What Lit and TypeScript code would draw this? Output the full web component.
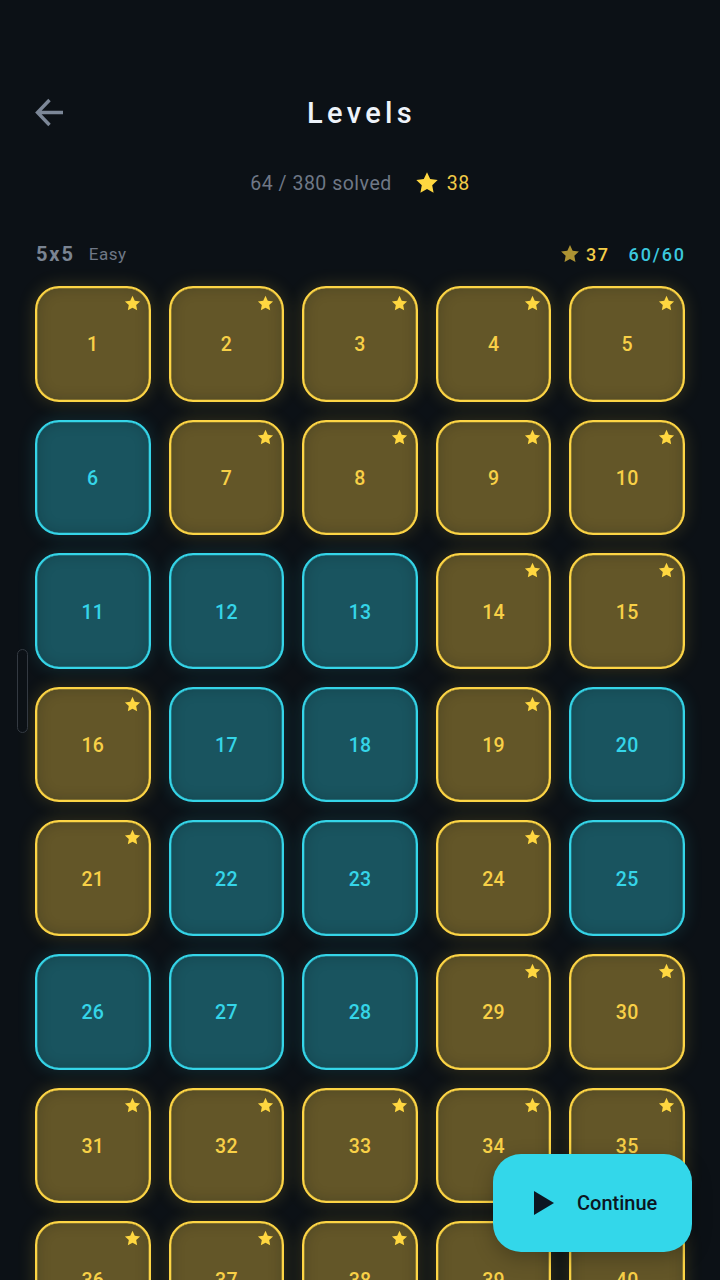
import { LitElement, html, css, svg } from "lit";
import { customElement } from "lit/decorators.js";

const STAR = svg`<path d="M12 1.2l3.2 6.9 7.5.9-5.5 5.2 1.4 7.5L12 18.1l-6.6 3.6 1.4-7.5L1.3 9l7.5-.9z"/>`;
const TEAL = new Set([6, 11, 12, 13, 17, 18, 20, 22, 23, 25, 26, 27, 28]);

@customElement("app-root")
export class AppRoot extends LitElement {
  static styles = css`
    :host {
      display: block;
      width: 720px;
      height: 1280px;
      position: relative;
      overflow: hidden;
      background: #0c1116;
      font-family: Roboto, "Liberation Sans", sans-serif;
    }
    .header {
      display: flex;
      align-items: center;
      justify-content: center;
      height: 40px;
      margin-top: 93px;
      padding: 0 35px;
      position: relative;
    }
    .back {
      position: absolute;
      left: 34px;
      top: 5px;
      width: 30px;
      height: 30px;
      display: block;
      fill: none;
      stroke: #7c8797;
      stroke-width: 3.4;
    }
    .title {
      font-size: 29px;
      font-weight: 500;
      letter-spacing: 4.3px;
      color: #eef3fa;
      line-height: 40px;
      margin-left: 3px;
    }
    .summary {
      display: flex;
      justify-content: center;
      align-items: center;
      height: 24px;
      margin-top: 38px;
      font-size: 19.5px;
      letter-spacing: 0.5px;
      color: #6f7886;
    }
    .summary .star {
      width: 24px;
      height: 24px;
      fill: #ffd740;
      margin: 0 8px 0 23px;
      display: block;
    }
    .summary .count {
      color: #f2cb47;
    }
    .section {
      display: flex;
      align-items: center;
      justify-content: space-between;
      height: 24px;
      margin-top: 47px;
      padding: 0 34px 0 36px;
    }
    .group {
      display: flex;
      align-items: center;
    }
    .size {
      font-size: 20px;
      font-weight: 700;
      letter-spacing: 1.9px;
      color: #7a8492;
    }
    .diff {
      font-size: 17px;
      letter-spacing: 0.5px;
      color: #6f7886;
      margin-left: 14px;
    }
    .sstar {
      width: 20px;
      height: 20px;
      fill: #ad9333;
      display: block;
      margin-right: 6px;
    }
    .stars,
    .done {
      font-size: 18px;
      font-weight: 500;
      letter-spacing: 1.9px;
    }
    .stars {
      color: #f4cd48;
      letter-spacing: 1.5px;
    }
    .done {
      color: #3bc8de;
      margin-left: 19px;
    }
    .grid {
      display: grid;
      grid-template-columns: repeat(5, 1fr);
      gap: 18px;
      padding: 0 35px;
      margin-top: 20px;
    }
    .cell {
      position: relative;
      box-sizing: border-box;
      aspect-ratio: 1;
      border-radius: 24px;
      border: 2px solid;
      display: flex;
      align-items: center;
      justify-content: center;
      padding-top: 2px;
      font-size: 19.5px;
      font-weight: 500;
      letter-spacing: 0.3px;
    }
    .gold {
      border-color: #fdd545;
      color: #f8d047;
      background: #635628;
      box-shadow: 0 0 18px rgba(255, 214, 64, 0.18), inset 0 0 0 0.3px #fdd545,
        inset 0 0 14px rgba(11, 16, 21, 0.22);
    }
    .teal {
      border-color: #35d5e8;
      color: #35d5e8;
      background: #19545f;
      box-shadow: 0 0 18px rgba(53, 213, 232, 0.16), inset 0 0 0 0.3px #35d5e8,
        inset 0 0 14px rgba(11, 16, 21, 0.22);
    }
    .badge {
      position: absolute;
      top: 7px;
      right: 8px;
      width: 17px;
      height: 17px;
      fill: #ffd740;
      display: block;
    }
    .scroll {
      position: absolute;
      left: 17px;
      top: 649px;
      width: 11px;
      height: 84px;
      box-sizing: border-box;
      border: 1px solid #343a42;
      border-radius: 6px;
      background: #0c1116;
    }
    .fab {
      position: absolute;
      left: 493px;
      top: 1154px;
      width: 199px;
      height: 98px;
      border-radius: 28px;
      background: #33d7ea;
      display: flex;
      align-items: center;
      box-sizing: border-box;
      padding-left: 41px;
      color: #0c1622;
      font-size: 20px;
      font-weight: 500;
      box-shadow: 0 6px 20px rgba(0, 0, 0, 0.25);
    }
    .fab svg {
      width: 20px;
      height: 24px;
      fill: #0c1622;
      display: block;
      margin-right: 23px;
    }
  `;

  render() {
    const levels = Array.from({ length: 40 }, (_, i) => i + 1);
    return html`
      <div class="header">
        <svg class="back" viewBox="0 0 30 30">
          <path d="M29 14.5H3.5M15.5 2L3.5 14.5 15.5 27" />
        </svg>
        <div class="title">Levels</div>
      </div>
      <div class="summary">
        <span>64 / 380 solved</span>
        <svg class="star" viewBox="0 0 24 24">${STAR}</svg>
        <span class="count">38</span>
      </div>
      <div class="section">
        <div class="group">
          <span class="size">5x5</span>
          <span class="diff">Easy</span>
        </div>
        <div class="group">
          <svg class="sstar" viewBox="0 0 24 24">${STAR}</svg>
          <span class="stars">37</span>
          <span class="done">60/60</span>
        </div>
      </div>
      <div class="grid">
        ${levels.map((n) => {
          const teal = TEAL.has(n);
          return html`<div class="cell ${teal ? "teal" : "gold"}">
            ${n}
            ${teal ? null : html`<svg class="badge" viewBox="0 0 24 24">${STAR}</svg>`}
          </div>`;
        })}
      </div>
      <div class="scroll"></div>
      <div class="fab">
        <svg viewBox="0 0 20 24"><path d="M0 0l20 12L0 24z" /></svg>
        <span>Continue</span>
      </div>
    `;
  }
}
